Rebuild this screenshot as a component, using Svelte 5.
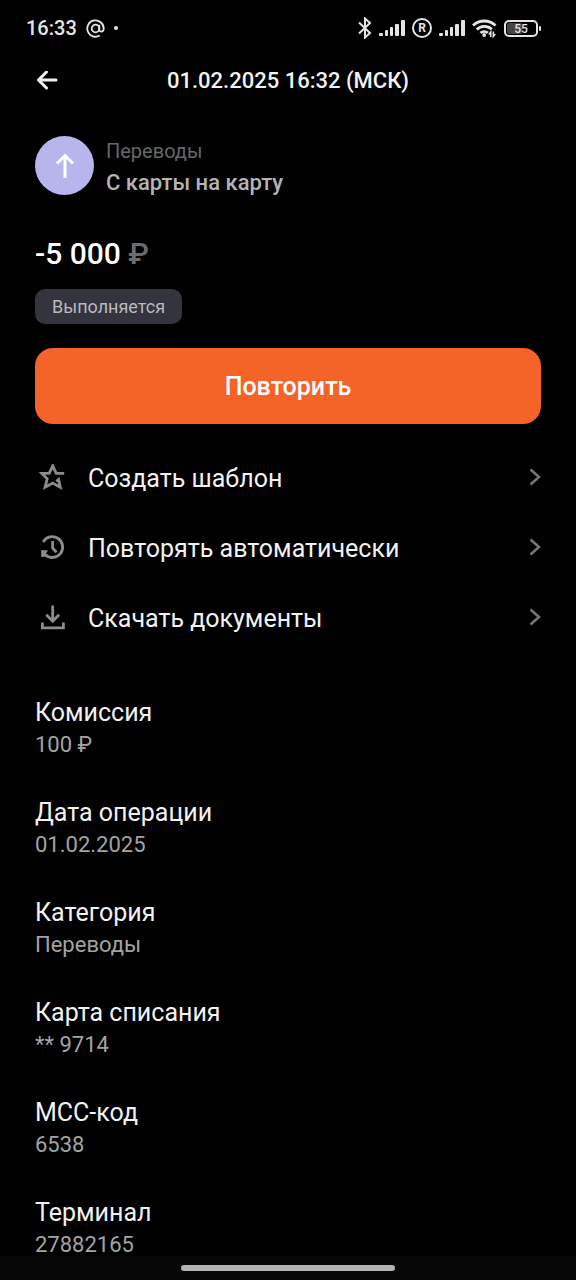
<script>
  let amount = "-5 000";
  let battery = 55;

  const actions = [
    { icon: "star", title: "Создать шаблон" },
    { icon: "history", title: "Повторять автоматически" },
    { icon: "download", title: "Скачать документы" },
  ];

  const details = [
    { label: "Комиссия", value: "100 ₽" },
    { label: "Дата операции", value: "01.02.2025" },
    { label: "Категория", value: "Переводы" },
    { label: "Карта списания", value: "** 9714" },
    { label: "МСС-код", value: "6538" },
    { label: "Терминал", value: "27882165" },
  ];
</script>

{#snippet signal()}
  <svg width="26" height="18" viewBox="0 0 26 18" fill="currentColor">
    <rect x="0" y="14" width="4" height="3" rx="1" />
    <rect x="6" y="11" width="3" height="6" rx="1" />
    <rect x="11" y="8" width="3" height="9" rx="1" />
    <rect x="16" y="5" width="4" height="12" rx="1" />
    <rect x="22" y="1" width="4" height="16" rx="1" />
  </svg>
{/snippet}

<div class="screen">
  <div class="status">
    <div class="status-left">
      <span class="time">16:33</span>
      <svg width="19" height="19" viewBox="0 0 19 19" fill="none" stroke="currentColor" stroke-width="1.8">
        <circle cx="9.5" cy="9.5" r="3.8" />
        <path d="M13.3 5.8v4.6c0 3.2 4.4 2.9 4.4-.9A8.2 8.2 0 1 0 13.8 16.5" />
      </svg>
      <span class="dot"></span>
    </div>
    <div class="status-right">
      <svg width="14" height="22" viewBox="0 0 14 22" fill="none" stroke="currentColor" stroke-width="2">
        <path d="M1 5.5l11 10.5-5 4.5V1.5l5 4.5L1 16.5" />
      </svg>
      {@render signal()}
      <span class="roaming">R</span>
      {@render signal()}
      <svg width="25" height="20" viewBox="0 0 25 20" fill="none" stroke="currentColor" stroke-width="2.8">
        <path d="M1 7.5a16.3 16.3 0 0 1 22.5 0" />
        <path d="M4.8 11.5a10.8 10.8 0 0 1 15-.2" />
        <path d="M8.5 15a5.6 5.6 0 0 1 7.3-.2" />
        <circle cx="12.2" cy="17" r="1.9" fill="currentColor" stroke="none" />
        <path d="M18.8 19v-5l-2 2.5M21.3 13.5v5l2-2.5" stroke-width="1.5" />
      </svg>
      <span class="battery">
        <span class="battery-body">
          <span class="battery-level" style="width: {battery}%"></span>
          <span class="battery-text">{battery}</span>
        </span>
        <span class="battery-tip"></span>
      </span>
    </div>
  </div>

  <header>
    <button class="back" aria-label="Назад">
      <svg width="22" height="20" viewBox="0 0 22 20" fill="none" stroke="currentColor" stroke-width="3" stroke-linecap="round" stroke-linejoin="round">
        <path d="M20 9H3M10.5 1L2.5 9l8 8" />
      </svg>
    </button>
    <h1>01.02.2025 16:32 (МСК)</h1>
  </header>

  <main>
    <div class="operation">
      <div class="avatar">
        <svg width="20" height="26" viewBox="0 0 20 26" fill="none" stroke="currentColor" stroke-width="3">
          <path d="M10 25V3M2 10.5L10 2.5l8 8" />
        </svg>
      </div>
      <div>
        <div class="category">Переводы</div>
        <div class="name">С карты на карту</div>
      </div>
    </div>

    <div class="amount">{amount} <span>₽</span></div>
    <div class="badge">Выполняется</div>
    <button class="repeat">Повторить</button>

    <div class="actions">
      {#each actions as action}
        <button class="action">
          <svg class="icon" width="28" height="28" viewBox="0 0 28 28" fill="none" stroke="currentColor" stroke-width="2.8">
            {#if action.icon === "star"}
              <path d="M25.2 9.4h-8L13.7 1.8 10.2 9.4H2.8l5.4 5.3-2.1 8.6 7.6-4.3 7.6 4.3-1.7-7.8-2.4 1.8" />
            {:else if action.icon === "history"}
              <path d="M4.2 8A10.4 10.4 0 1 1 6 20.5" />
              <path d="M13.6 7v7.2l4 4" />
              <path d="M2.2 23v-7l7 .6-2.4 2.8 1.4 3.2z" fill="currentColor" stroke="none" />
            {:else}
              <path d="M13.7 1.5v15M7.3 10.8l6.4 6.4 6.4-6.4M3.4 18.5v5.3h21v-5.3" />
            {/if}
          </svg>
          <span>{action.title}</span>
          <svg width="12" height="20" viewBox="0 0 12 20" fill="none" stroke="#777" stroke-width="2.5">
            <path d="M1.5 1.5L10 9l-8.5 7.5" />
          </svg>
        </button>
      {/each}
    </div>

    <dl>
      {#each details as item}
        <div class="detail">
          <dt>{item.label}</dt>
          <dd>{item.value}</dd>
        </div>
      {/each}
    </dl>
  </main>

  <div class="nav-bar"><span></span></div>
</div>

<style>
  :global(body) {
    background: black;
  }

  .screen {
    height: 100vh;
    display: flex;
    flex-direction: column;
    overflow: hidden;
    background: black;
    color: #f2f2f2;
    font-family: Roboto, "Noto Sans", sans-serif;
  }

  button {
    border: 0;
    padding: 0;
    background: transparent;
    font-family: inherit;
    color: inherit;
    cursor: pointer;
  }

  svg {
    display: block;
    flex: none;
  }

  .status {
    flex: none;
    height: 56px;
    padding: 0 35px 0 26px;
    display: flex;
    align-items: center;
    justify-content: space-between;
    color: #e4e4e4;
  }

  .status-left,
  .status-right {
    display: flex;
    align-items: center;
  }

  .status-left {
    gap: 9px;
  }

  .status-right {
    gap: 7px;
  }

  .time {
    font-size: 20px;
    line-height: 24px;
    font-weight: 500;
  }

  .dot {
    width: 4px;
    height: 4px;
    border-radius: 50%;
    background: currentColor;
  }

  .roaming {
    box-sizing: border-box;
    width: 20px;
    height: 20px;
    border: 2px solid;
    border-radius: 50%;
    font-size: 12px;
    line-height: 17px;
    font-weight: 700;
    text-align: center;
  }

  .battery {
    display: flex;
    align-items: center;
    gap: 1px;
  }

  .battery-body {
    position: relative;
    box-sizing: border-box;
    width: 34px;
    height: 17px;
    padding: 1px;
    border: 2px solid;
    border-radius: 5px;
  }

  .battery-level {
    display: block;
    height: 100%;
    border-radius: 2px;
    background: #444;
  }

  .battery-text {
    position: absolute;
    inset: 0;
    font-size: 12px;
    line-height: 14px;
    font-weight: 500;
    text-align: center;
  }

  .battery-tip {
    width: 2px;
    height: 5px;
    border-radius: 1px;
    background: currentColor;
  }

  header {
    flex: none;
    height: 50px;
    padding: 0 36px;
    display: grid;
    grid-template-columns: 22px 1fr 22px;
    align-items: center;
  }

  h1 {
    margin: 0;
    font-size: 22px;
    line-height: 28px;
    font-weight: 500;
    text-align: center;
  }

  main {
    flex: 1;
    min-height: 0;
    overflow: hidden;
    padding: 30px 35px 0;
  }

  .operation {
    display: flex;
    align-items: flex-start;
    gap: 12px;
  }

  .avatar {
    width: 59px;
    height: 59px;
    border-radius: 50%;
    display: flex;
    align-items: center;
    justify-content: center;
    background: #b7b5ec;
    color: white;
  }

  .category {
    font-size: 20px;
    line-height: 30px;
    color: #676767;
  }

  .name {
    font-size: 22px;
    line-height: 34px;
    font-weight: 500;
    color: #b4b4b4;
  }

  .amount {
    margin-top: 36px;
    font-size: 30px;
    line-height: 36px;
    font-weight: 500;
    color: white;
  }

  .amount span {
    color: #6c6c6c;
  }

  .badge {
    width: fit-content;
    margin-top: 17px;
    padding: 0 17px;
    border-radius: 10px;
    background: #33343e;
    font-size: 18px;
    line-height: 35px;
    color: #b9babf;
  }

  .repeat {
    display: block;
    width: 100%;
    height: 76px;
    margin-top: 24px;
    border-radius: 18px;
    background: #f46328;
    font-size: 25px;
    font-weight: 500;
    color: white;
  }

  .actions {
    margin-top: 19px;
  }

  .action {
    display: flex;
    align-items: center;
    width: 100%;
    height: 70px;
    padding-left: 4px;
    font-size: 25px;
    text-align: left;
  }

  .icon {
    color: #8c8c8c;
  }

  .action span {
    flex: 1;
    margin-left: 21px;
  }

  dl {
    margin: 44px 0 0;
    display: flex;
    flex-direction: column;
    gap: 36px;
  }

  dt {
    font-size: 25px;
    line-height: 32px;
  }

  dd {
    margin: 0;
    font-size: 22px;
    line-height: 32px;
    color: #a3a3a3;
  }

  .nav-bar {
    flex: none;
    height: 24px;
    display: flex;
    align-items: center;
    justify-content: center;
    background: #070707;
  }

  .nav-bar span {
    width: 37%;
    height: 6px;
    border-radius: 3px;
    background: #b4b4b4;
  }
</style>
